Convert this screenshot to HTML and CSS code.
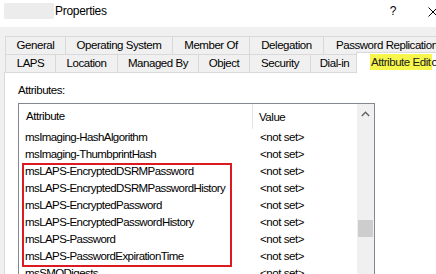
FILE: index.html
```html
<!DOCTYPE html>
<html>
<head>
<meta charset="utf-8">
<link rel="stylesheet" href="styles.css">
</head>
<body>
<div class="win">
  <div class="titlebar">
    <span class="blurname"></span>
    <span class="title">Properties</span>
    <span class="help">?</span>
    <svg class="close" width="10" height="10" viewBox="0 0 10 10"><path d="M0.5 0.5 L9.5 9.5 M9.5 0.5 L0.5 9.5" stroke="#000" stroke-width="1" fill="none"/></svg>
  </div>
  <div class="tabs">
    <div class="tabrow">
      <div class="tab w-general">General</div>
      <div class="tab w-os">Operating System</div>
      <div class="tab w-member">Member Of</div>
      <div class="tab w-deleg">Delegation</div>
      <div class="tab w-pwrep">Password Replication</div>
    </div>
    <div class="tabrow">
      <div class="tab w-laps">LAPS</div>
      <div class="tab w-loc">Location</div>
      <div class="tab w-managed">Managed By</div>
      <div class="tab w-object">Object</div>
      <div class="tab w-security">Security</div>
      <div class="tab w-dialin">Dial-in</div>
      <div class="tab sel"><mark class="hl">Attribute Edit</mark>or</div>
    </div>
  </div>
  <div class="pane">
    <div class="label">Attributes:</div>
    <div class="list">
      <div class="listmain">
        <div class="hdr"><div class="c1">Attribute</div><div class="c2">Value</div></div>
        <div class="row"><div class="c1">msImaging-HashAlgorithm</div><div class="c2">&lt;not set&gt;</div></div>
        <div class="row"><div class="c1">msImaging-ThumbprintHash</div><div class="c2">&lt;not set&gt;</div></div>
        <div class="row"><div class="c1">msLAPS-EncryptedDSRMPassword</div><div class="c2">&lt;not set&gt;</div></div>
        <div class="row"><div class="c1">msLAPS-EncryptedDSRMPasswordHistory</div><div class="c2">&lt;not set&gt;</div></div>
        <div class="row"><div class="c1">msLAPS-EncryptedPassword</div><div class="c2">&lt;not set&gt;</div></div>
        <div class="row"><div class="c1">msLAPS-EncryptedPasswordHistory</div><div class="c2">&lt;not set&gt;</div></div>
        <div class="row"><div class="c1">msLAPS-Password</div><div class="c2">&lt;not set&gt;</div></div>
        <div class="row"><div class="c1">msLAPS-PasswordExpirationTime</div><div class="c2">&lt;not set&gt;</div></div>
        <div class="row"><div class="c1">msSMODigests</div><div class="c2">&lt;not set&gt;</div></div>
      </div>
      <div class="vscroll">
        <div class="upbtn"><svg width="9" height="6" viewBox="0 0 9 6"><path d="M0.8 5 L4.5 1.2 L8.2 5" stroke="#606060" stroke-width="1.3" fill="none"/></svg></div>
        <div class="thumb"></div>
      </div>
      <div class="redbox"></div>
    </div>
  </div>
</div>
</body>
</html>
```
FILE: styles.css
```css
html, body {
  margin: 0;
  padding: 0;
}
body {
  width: 436px;
  height: 274px;
  overflow: hidden;
  background: #f0f0f0;
  font-family: "Liberation Sans", Arial, sans-serif;
  font-size: 11.5px;
  letter-spacing: -0.45px;
  color: #000;
}
.win {
  width: 436px;
  height: 274px;
  overflow: hidden;
}
.titlebar {
  height: 27px;
  background: #fff;
  display: flex;
  align-items: flex-start;
  position: relative;
}
.blurname {
  width: 50px;
  height: 16px;
  margin: 3px 0 0 4px;
  background: #ececec;
  border-radius: 1px;
}
.title {
  margin-left: 1px;
  line-height: 23px;
  font-size: 12px;
  letter-spacing: -0.3px;
}
.help {
  margin-left: auto;
  margin-right: 40px;
  line-height: 23px;
  font-size: 12px;
}
.close {
  position: absolute;
  left: 428px;
  top: 7px;
}
.tabs {
  margin-top: 9px;
  padding-left: 5px;
  position: relative;
  z-index: 2;
}
.tabrow {
  display: flex;
  align-items: flex-start;
  white-space: nowrap;
}
.tab {
  flex: none;
  box-sizing: border-box;
  height: 18px;
  line-height: 17px;
  border-top: 1px solid #d9d9d9;
  border-left: 1px solid #d9d9d9;
  text-align: center;
  background: #f0f0f0;
}
.w-general { width: 60px; }
.w-os { width: 107px; }
.w-member { width: 77px; }
.w-deleg { width: 74px; }
.w-pwrep { width: 130px; text-align: left; padding-left: 12px; }
.w-laps { width: 50px; }
.w-loc { width: 62px; }
.w-managed { width: 81px; }
.w-object { width: 51px; }
.w-security { width: 61px; }
.w-dialin { width: 49px; border-right: 1px solid #d9d9d9; }
.tab.sel {
  width: 90px;
  height: 21px;
  margin-top: -2px;
  margin-bottom: -1px;
  margin-left: -3px;
  background: #fff;
  text-align: left;
  padding-left: 13px;
  line-height: 19px;
  position: relative;
  z-index: 3;
}
.hl {
  background: #f6f64c;
  color: #222;
  padding: 2px 1px 2px 1px;
}
.pane {
  margin-left: 4px;
  border-top: 1px solid #d9d9d9;
  border-left: 1px solid #d9d9d9;
  background: #fff;
  height: 220px;
  padding: 11px 0 0 13px;
  position: relative;
  z-index: 1;
}
.label {
  line-height: 13px;
}
.list {
  margin-top: 6px;
  width: 357px;
  box-sizing: border-box;
  border: 1px solid #828790;
  height: 200px;
  display: flex;
  position: relative;
}
.listmain {
  width: 338px;
  flex: none;
}
.hdr {
  display: flex;
  height: 25px;
  align-items: center;
}
.hdr .c1 {
  width: 234px;
  box-sizing: border-box;
  padding-left: 7px;
  height: 25px;
  line-height: 24px;
  border-right: 1px solid #e5e5e5;
}
.hdr .c2 {
  padding-left: 6px;
  line-height: 24px;
}
.row {
  display: flex;
  height: 17px;
  line-height: 17px;
  white-space: nowrap;
  letter-spacing: -0.58px;
}
.row .c1 {
  width: 235px;
  flex: none;
  box-sizing: border-box;
  padding-left: 6px;
  overflow: hidden;
}
.row .c2 {
  padding-left: 6px;
  letter-spacing: -0.45px;
}
.vscroll {
  width: 17px;
  flex: none;
  background: #f0f0f0;
  display: flex;
  flex-direction: column;
  align-items: center;
}
.upbtn {
  height: 17px;
  width: 17px;
  display: flex;
  align-items: center;
  justify-content: center;
  padding-top: 2px;
  box-sizing: border-box;
}
.thumb {
  margin-top: 99px;
  width: 15px;
  height: 17px;
  background: #cdcdcd;
}
.redbox {
  position: absolute;
  left: 3px;
  top: 59px;
  width: 210px;
  height: 104px;
  box-sizing: border-box;
  border: 2px solid #dc1a22;
}
```
